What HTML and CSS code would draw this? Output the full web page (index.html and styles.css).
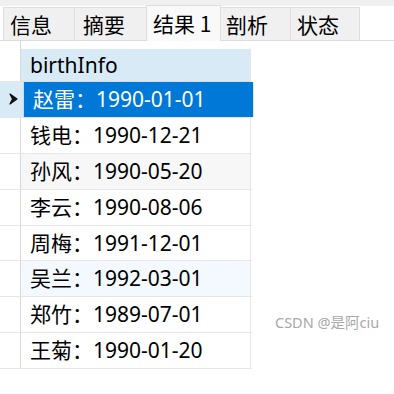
FILE: index.html
```html
<!DOCTYPE html>
<html lang="zh-CN">
<head>
  <meta charset="UTF-8">
  <meta name="viewport" content="width=device-width, initial-scale=1.0">
  <title>结果 1</title>
  <link rel="stylesheet" href="styles.css">
</head>
<body>
  <div class="tabs">
    <div class="tab t1">信息</div>
    <div class="tab t2">摘要</div>
    <div class="tab active">结果 1</div>
    <div class="tab t4">剖析</div>
    <div class="tab t5">状态</div>
  </div>

  <div class="grid">
    <div class="row head">
      <div class="mark"></div>
      <div class="cell">birthInfo</div>
    </div>
    <div class="row selected">
      <div class="mark">
        <svg width="9" height="12" viewBox="0 0 9 12"><path d="M1 1 L8 6 L1 11 L3.5 6 Z" fill="#111" stroke="#111" stroke-width="1.2" stroke-linejoin="round"/></svg>
      </div>
      <div class="cell">赵雷：1990-01-01</div>
    </div>
    <div class="row">
      <div class="mark"></div>
      <div class="cell">钱电：1990-12-21</div>
    </div>
    <div class="row gray">
      <div class="mark"></div>
      <div class="cell">孙风：1990-05-20</div>
    </div>
    <div class="row">
      <div class="mark"></div>
      <div class="cell">李云：1990-08-06</div>
    </div>
    <div class="row">
      <div class="mark"></div>
      <div class="cell">周梅：1991-12-01</div>
    </div>
    <div class="row hover">
      <div class="mark"></div>
      <div class="cell">吴兰：1992-03-01</div>
    </div>
    <div class="row">
      <div class="mark"></div>
      <div class="cell">郑竹：1989-07-01</div>
    </div>
    <div class="row">
      <div class="mark"></div>
      <div class="cell">王菊：1990-01-20</div>
    </div>
  </div>

  <div class="watermark">CSDN @是阿ciu</div>
</body>
</html>
```

FILE: styles.css
```css
body {
  margin: 0;
  background: #ffffff;
  color: #000000;
  font-family: "Noto Sans", "Noto Sans CJK SC", sans-serif;
  width: 394px;
  height: 394px;
  overflow: hidden;
  position: relative;
}
.tabs {
  display: flex;
  align-items: flex-end;
  height: 40px;
  padding-left: 3px;
  border-bottom: 1px solid #dcdcdc;
  background: linear-gradient(#f0f0f0 6px, #ffffff 6px);
}
.tab {
  box-sizing: border-box;
  height: 33px;
  padding: 0 6px;
  background: #f0f0f0;
  border: 1px solid #dedede;
  border-bottom: none;
  font-family: "Noto Sans CJK SC", sans-serif;
  font-size: 21px;
  line-height: 32px;
  margin-right: -1px;
}
.t1 { width: 72px; }
.t2 { width: 73px; padding-left: 8px; }
.t4 { width: 71px; padding-left: 5px; }
.t5 { width: 70px; }
.tab.active {
  width: 75px;
  height: 36px;
  margin-bottom: -1px;
  background: #f9f9f9;
  line-height: 34px;
  position: relative;
  z-index: 1;
}
.grid {
  width: 252px;
}
.row {
  display: flex;
  box-sizing: border-box;
  height: 35.875px;
  border-bottom: 1px solid #e6e6e6;
  font-size: 21px;
}
.mark {
  width: 20px;
  flex: none;
  border-right: 1px solid #d8d8d8;
  display: flex;
  align-items: center;
  justify-content: center;
}
.cell {
  width: 230px;
  flex: none;
  border-right: 1px solid #e6e6e6;
  padding-left: 9px;
  box-sizing: border-box;
  line-height: 34px;
  white-space: nowrap;
}
.row.head {
  height: 41px;
  border-bottom: none;
}
.row.head .cell {
  margin-top: 8px;
  height: 33px;
  background: #d9eaf7;
  border-bottom: 1px solid #cfdfec;
  line-height: 32px;
}
.row.head .mark {
  border-bottom: 1px solid #e6e6e6;
}
.row.selected .cell {
  background: #0078d7;
  color: #ffffff;
}
.row.selected .mark {
  background: #d9eaf7;
  padding-left: 3px;
}
.row.gray .cell {
  background: #f7f7f7;
}
.row.hover .cell {
  background: #f3f9fe;
}
.watermark {
  position: absolute;
  left: 275px;
  top: 311px;
  font-size: 14.5px;
  color: #a8a8a8;
}
```
